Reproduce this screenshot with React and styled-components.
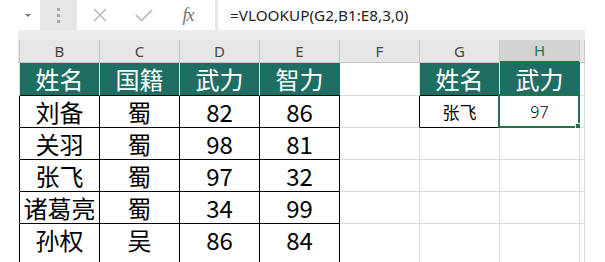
import React from 'react';
import styled, { createGlobalStyle } from 'styled-components';

const colors = {
  teal: '#1f6e63',
  green: '#217346',
  grid: '#d9d9d9',
  chrome: '#e6e6e6',
  band: '#ececec',
  headLine: '#c6c6c6',
  ink: '#000',
};

const GlobalStyle = createGlobalStyle`
  html, body {
    margin: 0;
    padding: 0;
    background: #fff;
  }
  body {
    width: 605px;
    height: 262px;
    overflow: hidden;
    font-family: "Noto Sans", "Noto Sans CJK SC", sans-serif;
  }
`;

const FormulaBar = styled.div`
  display: flex;
  height: 30px;
  background: ${colors.chrome};
`;

const NameBox = styled.div`
  width: 40px;
  background: #fff;
  display: flex;
  align-items: center;
  justify-content: flex-end;
  padding-right: 9px;
  box-sizing: border-box;
`;

const DropArrow = styled.span`
  width: 0;
  height: 0;
  border-left: 3px solid transparent;
  border-right: 3px solid transparent;
  border-top: 3px solid #777;
`;

const Grip = styled.div`
  width: 37px;
  display: flex;
  flex-direction: column;
  align-items: center;
  justify-content: center;
  gap: 3px;
`;

const GripDot = styled.span`
  width: 3px;
  height: 3px;
  background: #a8a8a8;
`;

const Buttons = styled.div`
  width: 138px;
  background: #fff;
  display: flex;
  padding-left: 1px;
  box-sizing: border-box;
`;

const ToolButton = styled.div`
  width: 44px;
  display: flex;
  align-items: center;
  justify-content: center;
  color: ${(p) => p.$color || '#bcbcbc'};
`;

const FxLabel = styled.span`
  font-family: "Liberation Serif", serif;
  font-style: italic;
  font-size: 18px;
  color: #6f6f6f;
  letter-spacing: -1px;
`;

const FormulaInput = styled.div`
  flex: 1;
  margin-left: 3px;
  background: #fff;
  display: flex;
  align-items: center;
  padding-left: 12px;
  font-size: 15.3px;
  color: #222;
`;

const Sheet = styled.div`
  margin-left: 18px;
  width: 567px;
`;

const Band = styled.div`
  height: 10px;
  background: ${colors.band};
`;

const Grid = styled.table`
  border-collapse: separate;
  border-spacing: 0;
  table-layout: fixed;
  width: 567px;
`;

const ColHead = styled.th`
  box-sizing: border-box;
  height: 23px;
  padding: 0;
  font-weight: normal;
  font-size: 15px;
  line-height: 1;
  background: ${(p) => (p.$active ? '#d3d3d3' : colors.chrome)};
  color: ${(p) => (p.$active ? colors.green : '#444')};
  border-right: 1px solid ${colors.headLine};
  border-bottom: ${(p) => (p.$active ? `2px solid ${colors.green}` : `1px solid ${colors.headLine}`)};
`;

const Cell = styled.td`
  position: relative;
  box-sizing: border-box;
  height: ${(p) => p.$height}px;
  padding: 0 0 ${(p) => p.$cut || 0}px;
  text-align: center;
  vertical-align: middle;
  white-space: nowrap;
  overflow: visible;
  font-family: ${(p) => (p.$latin ? '"Noto Sans", sans-serif' : '"Noto Sans CJK SC", sans-serif')};
  font-size: ${(p) => p.$size || 24}px;
  font-weight: ${(p) => (p.$light ? 300 : 400)};
  line-height: 1;
  color: ${(p) => (p.$head ? '#fff' : colors.ink)};
  background: ${(p) => (p.$head ? colors.teal : '#fff')};
  border-right: 1px solid ${(p) => p.$right};
  border-bottom: 1px solid ${(p) => p.$bottom};
`;

const Selection = styled.span`
  position: absolute;
  inset: -2px -1px -1px -2px;
  border: 2px solid ${colors.green};
  pointer-events: none;

  &::after {
    content: '';
    position: absolute;
    right: -4px;
    bottom: -4px;
    width: 5px;
    height: 5px;
    background: ${colors.green};
    border: 1px solid #fff;
  }
`;

const widths = [2, 80, 80, 80, 80, 80, 80, 80, 5];
const letters = ['', 'B', 'C', 'D', 'E', 'F', 'G', 'H', ''];

const heroes = [
  ['刘备', '蜀', 82, 86],
  ['关羽', '蜀', 98, 81],
  ['张飞', '蜀', 97, 32],
  ['诸葛亮', '蜀', 34, 99],
  ['孙权', '吴', 86, 84],
];

// kind: plain | head | data | lookup | selected
const buildRows = () => {
  const rows = [];
  rows.push([
    { kind: 'plain' },
    ...['姓名', '国籍', '武力', '智力'].map((text) => ({ kind: 'head', text })),
    { kind: 'plain' },
    { kind: 'head', text: '姓名' },
    { kind: 'head', text: '武力' },
    { kind: 'plain' },
  ]);
  heroes.forEach((hero, i) => {
    rows.push([
      { kind: 'plain' },
      ...hero.map((text) => ({ kind: 'data', text })),
      { kind: 'plain' },
      i === 0 ? { kind: 'lookup', text: '张飞' } : { kind: 'plain' },
      i === 0 ? { kind: 'selected', text: '97' } : { kind: 'plain' },
      { kind: 'plain' },
    ]);
  });
  return rows;
};

const boxed = (c) => c && (c.kind === 'data' || c.kind === 'lookup');

const rightColor = (cell, next) => {
  if (cell.kind === 'head') return next && next.kind === 'head' ? '#d8e4e1' : colors.teal;
  if (boxed(cell) || boxed(next)) return colors.ink;
  return colors.grid;
};

const bottomColor = (cell, below) => {
  if (boxed(cell) || boxed(below)) return colors.ink;
  if (cell.kind === 'head') return colors.ink;
  return colors.grid;
};

const sizeFor = (kind) => {
  if (kind === 'lookup') return 17;
  if (kind === 'selected') return 16;
  return 24;
};

// the sheet keeps going below the frame, so the last visible row is cut off
const CUT = 8;
const heightFor = (r, count) => {
  if (r === 0) return 33;
  if (r === count - 1) return 32 + CUT;
  return 32;
};

const CloseIcon = () => (
  <svg width="16" height="14" viewBox="0 0 16 14">
    <path d="M2 1 L14 13 M14 1 L2 13" stroke="currentColor" strokeWidth="1.6" fill="none" />
  </svg>
);

const CheckIcon = () => (
  <svg width="18" height="14" viewBox="0 0 18 14">
    <path d="M1 7 L6.5 12.5 L17 2" stroke="currentColor" strokeWidth="2" fill="none" />
  </svg>
);

const App = () => {
  const rows = buildRows();

  return (
    <>
      <GlobalStyle />
      <FormulaBar>
        <NameBox>
          <DropArrow />
        </NameBox>
        <Grip>
          <GripDot />
          <GripDot />
          <GripDot />
        </Grip>
        <Buttons>
          <ToolButton>
            <CloseIcon />
          </ToolButton>
          <ToolButton $color="#c4c4c4">
            <CheckIcon />
          </ToolButton>
          <ToolButton>
            <FxLabel>fx</FxLabel>
          </ToolButton>
        </Buttons>
        <FormulaInput>=VLOOKUP(G2,B1:E8,3,0)</FormulaInput>
      </FormulaBar>
      <Sheet>
        <Band />
        <Grid>
          <colgroup>
            {widths.map((w, i) => (
              <col key={i} style={{ width: w }} />
            ))}
          </colgroup>
          <thead>
            <tr>
              {letters.map((l, i) => (
                <ColHead key={i} $active={l === 'H'}>
                  {l}
                </ColHead>
              ))}
            </tr>
          </thead>
          <tbody>
            {rows.map((row, r) => (
              <tr key={r}>
                {row.map((cell, c) => (
                  <Cell
                    key={c}
                    $height={heightFor(r, rows.length)}
                    $cut={r === rows.length - 1 ? CUT : 0}
                    $head={cell.kind === 'head'}
                    $latin={cell.kind === 'selected'}
                    $light={cell.kind === 'selected'}
                    $size={sizeFor(cell.kind)}
                    $right={rightColor(cell, row[c + 1])}
                    $bottom={bottomColor(cell, rows[r + 1] && rows[r + 1][c])}
                  >
                    {cell.text}
                    {cell.kind === 'selected' && <Selection />}
                  </Cell>
                ))}
              </tr>
            ))}
          </tbody>
        </Grid>
      </Sheet>
    </>
  );
};

export default App;
